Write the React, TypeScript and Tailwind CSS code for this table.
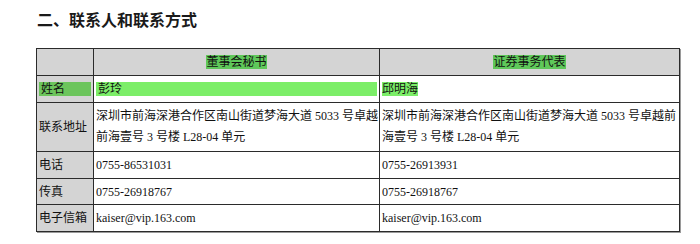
const bodyFont = {
  fontFamily: '"Liberation Serif", "Noto Sans CJK SC", serif',
};

const cell = "border border-[#2b2b2b] px-[2px] py-0 align-middle whitespace-nowrap";
const label = `${cell} bg-[#d4d4d4]`;

function InfoRow({ name, a, b }: { name: string; a: string; b: string }) {
  return (
    <tr className="h-[27px]">
      <td className={label}>{name}</td>
      <td className={cell}>{a}</td>
      <td className={cell}>{b}</td>
    </tr>
  );
}

export default function App() {
  return (
    <div className="w-[700px] h-[244px] overflow-hidden bg-white text-[#111]" style={bodyFont}>
      <h2
        className="pl-[37px] pt-[9px] text-[16px] font-bold leading-[20px] text-[#1a1a1a]"
        style={{ fontFamily: '"Noto Sans CJK SC", sans-serif' }}
      >
        二、联系人和联系方式
      </h2>
      <table className="ml-[36px] mt-[19px] w-[643px] table-fixed border-collapse text-[12px] leading-[14px] shadow-[1px_1px_0_#9a9a9a]">
        <colgroup>
          <col className="w-[57px]" />
          <col className="w-[286px]" />
          <col className="w-[300px]" />
        </colgroup>
        <tbody>
          <tr className="h-[27px] bg-[#d4d4d4]">
            <td className={cell}></td>
            <td className={`${cell} text-center`}>
              <span className="inline-block bg-[#5fc85a] leading-[14px]">董事会秘书</span>
            </td>
            <td className={`${cell} text-center`}>
              <span className="inline-block bg-[#5fc85a] leading-[14px]">证券事务代表</span>
            </td>
          </tr>
          <tr className="h-[27px]">
            <td className={`${label} px-0`}>
              <div className="bg-[#6cc55c] px-[2px] leading-[14px]">姓名</div>
            </td>
            <td className={`${cell} px-0`}>
              <div className="bg-[#7cee68] px-[2px] leading-[14px]">彭玲</div>
            </td>
            <td className={cell}>
              <span className="inline-block bg-[#7cee68] leading-[14px]">邱明海</span>
            </td>
          </tr>
          <tr className="h-[49px]">
            <td className={label}>联系地址</td>
            <td className={`${cell} leading-[21px]`}>
              深圳市前海深港合作区南山街道梦海大道 5033 号卓越
              <br />
              前海壹号 3 号楼 L28-04 单元
            </td>
            <td className={`${cell} leading-[21px]`}>
              深圳市前海深港合作区南山街道梦海大道 5033 号卓越前
              <br />
              海壹号 3 号楼 L28-04 单元
            </td>
          </tr>
          <InfoRow name="电话" a="0755-86531031" b="0755-26913931" />
          <tr className="h-[26px]">
            <td className={label}>传真</td>
            <td className={cell}>0755-26918767</td>
            <td className={cell}>0755-26918767</td>
          </tr>
          <InfoRow name="电子信箱" a="kaiser@vip.163.com" b="kaiser@vip.163.com" />
        </tbody>
      </table>
    </div>
  );
}
